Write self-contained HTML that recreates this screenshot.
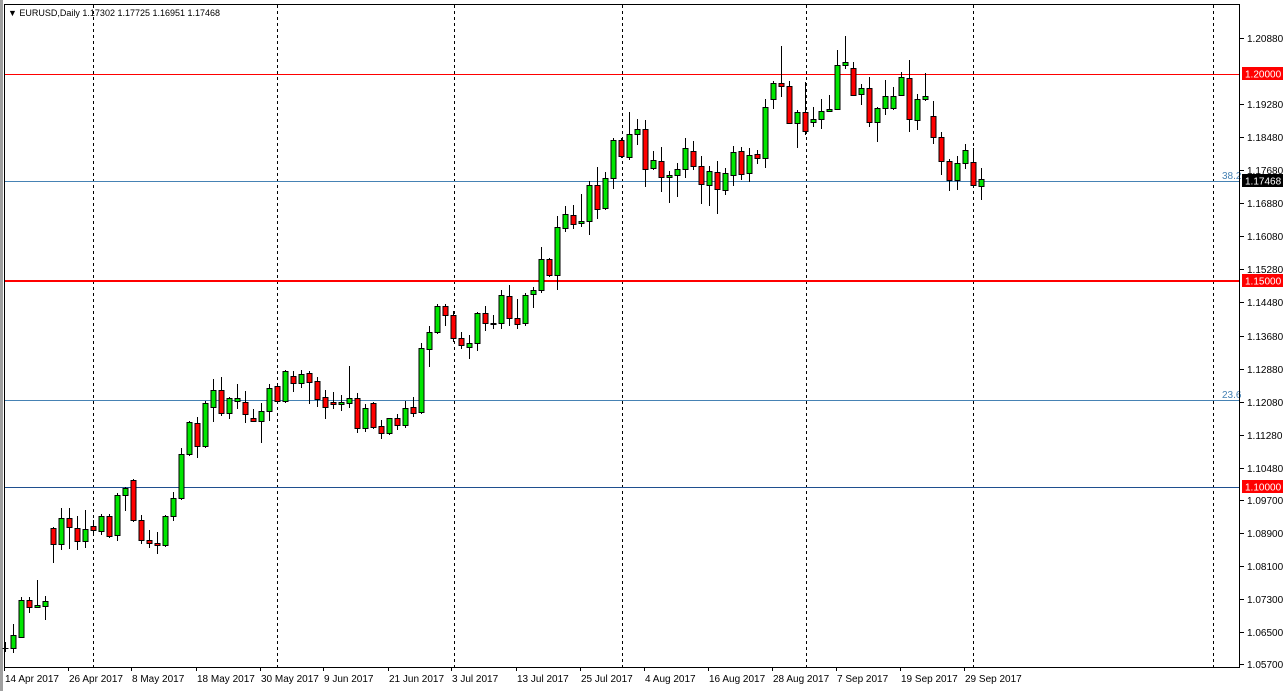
<!DOCTYPE html>
<html><head><meta charset="utf-8"><style>
html,body{margin:0;padding:0;background:#fff;width:1286px;height:691px;overflow:hidden}
svg{display:block;font-family:"Liberation Sans",sans-serif}
</style></head><body>
<svg id="s" width="1286" height="691" xmlns="http://www.w3.org/2000/svg">
<rect width="1286" height="691" fill="#fff"/>
<rect x="0" y="0" width="3" height="691" fill="#a0a0a0"/>
<g id="grid" stroke="#000" stroke-dasharray="3,3" stroke-width="1"></g>
<line x1="4" y1="74.5" x2="1240" y2="74.5" stroke="#ff0000" stroke-width="1"/>
<line x1="4" y1="281" x2="1240" y2="281" stroke="#ff0000" stroke-width="2"/>
<line x1="4" y1="487.5" x2="1240" y2="487.5" stroke="#1f4f8f" stroke-width="1"/>
<line x1="4" y1="181.5" x2="1240" y2="181.5" stroke="#4682b4" stroke-width="1"/>
<line x1="4" y1="400.5" x2="1240" y2="400.5" stroke="#4682b4" stroke-width="1"/>
<text x="1222" y="179" font-size="10" fill="#4682b4">38.2</text>
<text x="1222" y="398" font-size="10" fill="#4682b4">23.6</text>
<g id="c"></g>
<rect x="4.5" y="4.5" width="1235" height="663" fill="none" stroke="#000"/>
<g id="ax" font-size="10" fill="#000"></g>
<rect x="1242" y="67" width="41" height="13" fill="#ff0000"/>
<text x="1245" y="77.5" font-size="10" fill="#fff">1.20000</text>
<rect x="1242" y="274" width="41" height="13" fill="#ff0000"/>
<text x="1245" y="284.5" font-size="10" fill="#fff">1.15000</text>
<rect x="1242" y="480" width="41" height="13" fill="#ff0000"/>
<text x="1245" y="490.5" font-size="10" fill="#fff">1.10000</text>
<rect x="1242" y="174" width="41" height="13" fill="#000"/>
<text x="1245" y="184.5" font-size="10" fill="#fff">1.17468</text>
<text x="8" y="16" font-size="9" fill="#000">▼ EURUSD,Daily  1.17302 1.17725 1.16951 1.17468</text>
</svg>
<script>
var ns="http://www.w3.org/2000/svg";
function el(p,t,a,txt){var e=document.createElementNS(ns,t);for(var k in a)e.setAttribute(k,a[k]);if(txt)e.textContent=txt;p.appendChild(e);return e;}
var g=document.getElementById('grid');
[93,277,454,622,806,973,1213].forEach(function(x){el(g,'line',{x1:x+.5,y1:5,x2:x+.5,y2:667});});
var ax=document.getElementById('ax');
var L=[["1.20880",38],["1.19280",104],["1.18480",137],["1.17680",170],["1.16880",203],["1.16080",236],["1.15280",269],["1.14480",302],["1.13680",336],["1.12880",369],["1.12080",402],["1.11280",435],["1.10480",468],["1.09700",500],["1.08900",533],["1.08100",566],["1.07300",599],["1.06500",632],["1.05700",664]];
L.forEach(function(l){el(ax,'line',{x1:1240,y1:l[1]+.5,x2:1244,y2:l[1]+.5,stroke:'#000'});el(ax,'text',{x:1247,y:l[1]+4},l[0]);});
var D=[["14 Apr 2017",4],["26 Apr 2017",68],["8 May 2017",131],["18 May 2017",196],["30 May 2017",260],["9 Jun 2017",323],["21 Jun 2017",388],["3 Jul 2017",451],["13 Jul 2017",516],["25 Jul 2017",580],["4 Aug 2017",644],["16 Aug 2017",708],["28 Aug 2017",772],["7 Sep 2017",836],["19 Sep 2017",900],["29 Sep 2017",964]];
D.forEach(function(d){el(ax,'line',{x1:d[1]+.5,y1:667,x2:d[1]+.5,y2:671,stroke:'#000'});el(ax,'text',{x:d[1]+1,y:682},d[0]);});
// [bodyTop, bodyBot, wickTop, wickBot, up?]
var C=[[648,648,642,652,1],[635,648,624,653,1],[600,637,597,638,1],[600,607,597,613,0],[605,607,580,608,1],[601,606,596,620,1],
[528,544,527,563,0],[518,544,508,550,1],[518,527,508,549,0],[528,541,516,550,0],[529,541,510,548,1],[526,530,520,533,0],[516,531,514,535,1],[516,536,514,538,0],[495,535,493,541,1],[488,495,487,511,1],[480,520,479,522,0],[520,540,515,544,0],[540,543,530,548,0],[543,545,532,554,0],[516,545,515,547,1],[498,516,492,521,1],[454,498,448,500,1],[422,454,421,456,1],[423,446,417,458,0],[403,446,401,448,1],[390,407,379,422,1],[390,413,377,416,0],[398,413,397,419,1],[398,401,384,409,1],[402,414,391,423,0],
[418,421,409,422,0],[411,421,403,443,1],[388,411,384,421,1],[386,401,383,402,0],[371,401,370,403,1],[376,383,371,392,0],[374,383,370,388,1],[373,382,371,404,0],[381,399,377,407,0],[397,407,390,419,0],[402,404,392,409,0],[402,404,395,411,1],[398,403,366,408,1],[398,428,393,433,0],[408,428,404,432,1],[403,427,402,429,0],[426,433,420,439,0],[418,433,418,435,1],[418,425,414,430,0],[408,425,401,428,1],[407,413,397,417,0],[348,412,343,414,1],[332,349,326,367,1],[306,332,304,334,1],[306,315,304,326,0],[315,338,311,342,0],[338,345,332,349,0],[343,347,335,359,1],[313,343,312,351,1],[313,323,306,331,0],
[323,324,315,329,0],[295,323,290,329,1],[296,318,285,326,0],[318,324,299,329,0],[295,323,293,326,1],[290,294,287,308,1],[259,290,247,293,1],[259,275,258,277,0],[227,275,216,290,1],[214,228,206,232,1],[215,224,205,229,0],[221,223,194,227,1],[185,221,181,235,1],[185,209,167,219,0],[178,208,172,210,1],[140,178,138,189,1],[140,156,138,158,0],[134,157,112,160,1],[129,134,119,145,1],[129,169,120,187,0],[160,168,151,170,1],[161,177,147,192,0],[175,177,171,203,1],[169,175,163,197,1],[148,169,138,178,1],[151,166,141,170,0],[166,184,156,204,0],[171,185,166,206,1],[172,189,161,214,0],[173,190,168,195,1],
[152,175,146,186,1],[151,174,147,180,0],[155,173,148,182,1],[154,158,150,164,0],[107,158,99,168,1],[83,99,81,109,1],[83,86,46,97,0],[86,123,81,124,0],[112,123,110,148,1],[112,131,82,135,0],[119,122,107,127,1],[111,119,99,129,1],[109,111,95,112,1],[65,109,50,110,1],[62,65,36,69,1],[68,95,62,96,0],[88,94,84,105,1],[88,122,77,127,0],[108,122,107,142,1],[96,108,80,115,1],[96,108,87,110,1],[77,95,72,96,1],[78,119,60,132,0],[99,120,94,130,1],[96,99,73,101,1],[116,137,101,144,0],[137,161,132,175,0],[161,180,159,191,0],[163,180,156,190,1],[150,163,144,169,1],[162,185,148,186,0],[179,186,168,200,1]];
var cg=document.getElementById('c');
C.forEach(function(c,i){var x=Math.round(5+8*i)+.5;
el(cg,'line',{x1:x,y1:c[2],x2:x,y2:c[3],stroke:'#000','stroke-width':1});
var h=Math.max(c[1]-c[0],1);
if(c[1]-c[0]<1){el(cg,'line',{x1:x-3,y1:c[0]+.5,x2:x+3,y2:c[0]+.5,stroke:'#000'});}
else el(cg,'rect',{x:x-2.5,y:c[0]+.5,width:5,height:h,fill:c[4]?'#00e600':'#ff0000',stroke:'#000','stroke-width':1});
});
</script>
</body></html>
